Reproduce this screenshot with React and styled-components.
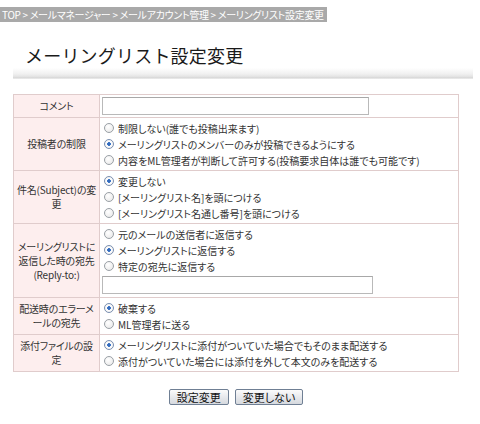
import React, { useState } from 'react'
import styled, { createGlobalStyle } from 'styled-components'

const GlobalStyle = createGlobalStyle`
  body {
    margin: 0;
    background: #fff;
    font-family: "Noto Sans CJK JP", "Noto Sans", sans-serif;
    color: #333;
  }
`

const Page = styled.div`
  width: 480px;
  height: 424px;
  overflow: hidden;
`

const Breadcrumb = styled.div`
  display: inline-block;
  height: 15px;
  line-height: 15px;
  padding: 0 3px 0 2px;
  background: #a9a9a9;
  color: #fff;
  font-size: 10px;
  letter-spacing: -0.3px;
  font-feature-settings: "palt";
  white-space: nowrap;
`

const TitleBlock = styled.div`
  margin: 18px 7px 0 13px;
`

const Title = styled.h1`
  margin: 0;
  padding-left: 12px;
  height: 26px;
  line-height: 26px;
  font-size: 18px;
  font-weight: normal;
  color: #1a1a1a;
  letter-spacing: 0.2px;
`

const TitleBand = styled.div`
  height: 11px;
  background: linear-gradient(#fff 0%, #f0f0f0 55%, #e2e2e2 80%, #d6d6d6 90%, #f4f4f4 100%);
`

const Table = styled.table`
  margin: 15px 0 0 13px;
  width: 446px;
  border-collapse: collapse;
  border: 1px solid #e0cccc;
  font-size: 10px;
  font-feature-settings: "palt";
`

const Label = styled.th`
  box-sizing: border-box;
  width: 86px;
  padding: 2px 0;
  background: #fdeeee;
  border: 1px solid #e0cccc;
  font-weight: normal;
  text-align: center;
  line-height: 14px;
  letter-spacing: -0.2px;
  white-space: nowrap;
  color: #333;
`

const Cell = styled.td`
  padding: 2px 2px;
  border: 1px solid #e0cccc;
  vertical-align: middle;
`

const Option = styled.label`
  display: flex;
  align-items: center;
  height: 16px;
  white-space: nowrap;
  color: #333;
`

const Radio = styled.input.attrs({ type: 'radio' })`
  appearance: none;
  flex: none;
  margin: 0 4px 0 2px;
  width: 10px;
  height: 10px;
  border-radius: 50%;
  border: 1px solid #9aa0a6;
  background: radial-gradient(circle at 40% 35%, #fff 0%, #e6e6e6 100%);
  &:checked {
    background: radial-gradient(circle, #2a5db0 0%, #3f78c8 28%, #fff 38%, #e8e8e8 100%);
    border-color: #7a8fb0;
  }
`

const TextInput = styled.input.attrs({ type: 'text' })`
  box-sizing: border-box;
  display: block;
  width: ${(props) => (props.$wide ? '271px' : '267px')};
  height: 18px;
  margin: ${(props) => (props.$wide ? '2px 0 1px' : '0')};
  border: 1px solid #b9b9b9;
  border-top-color: #a8a8a8;
  background: #fff;
`

const ButtonRow = styled.div`
  width: 446px;
  margin: 17px 0 0 13px;
  display: flex;
  justify-content: center;
  gap: 6px;
`

const Button = styled.button`
  height: 16px;
  padding: 0 7px;
  border: 1px solid #6f7f94;
  border-radius: 2px;
  background: linear-gradient(#fbfbfb, #e4e6ea 60%, #d6d9de);
  font-family: "Noto Sans CJK JP", sans-serif;
  font-size: 11px;
  font-feature-settings: "palt";
  line-height: 14px;
  color: #111;
`

const rows = [
  {
    label: ['投稿者の制限'],
    name: 'post',
    options: [
      '制限しない(誰でも投稿出来ます)',
      'メーリングリストのメンバーのみが投稿できるようにする',
      '内容をML管理者が判断して許可する(投稿要求自体は誰でも可能です)',
    ],
    checked: 1,
  },
  {
    label: ['件名(Subject)の変', '更'],
    name: 'subject',
    options: ['変更しない', '[メーリングリスト名]を頭につける', '[メーリングリスト名通し番号]を頭につける'],
    checked: 0,
  },
  {
    label: ['メーリングリストに', '返信した時の宛先', '(Reply-to:)'],
    name: 'reply',
    options: ['元のメールの送信者に返信する', 'メーリングリストに返信する', '特定の宛先に返信する'],
    checked: 1,
    input: true,
  },
  {
    label: ['配送時のエラーメ', 'ールの宛先'],
    name: 'error',
    options: ['破棄する', 'ML管理者に送る'],
    checked: 0,
  },
  {
    label: ['添付ファイルの設', '定'],
    name: 'attach',
    options: ['メーリングリストに添付がついていた場合でもそのまま配送する', '添付がついていた場合には添付を外して本文のみを配送する'],
    checked: 0,
  },
]

const App = () => {
  const [values, setValues] = useState(() =>
    Object.fromEntries(rows.map((r) => [r.name, r.checked]))
  )

  return (
    <Page>
      <GlobalStyle />
      <Breadcrumb>TOP &gt; メールマネージャー &gt; メールアカウント管理 &gt; メーリングリスト設定変更</Breadcrumb>
      <TitleBlock>
        <Title>メーリングリスト設定変更</Title>
        <TitleBand />
      </TitleBlock>
      <Table>
        <tbody>
          <tr>
            <Label>コメント</Label>
            <Cell>
              <TextInput />
            </Cell>
          </tr>
          {rows.map((row) => (
            <tr key={row.name}>
              <Label>
                {row.label.map((line, i) => (
                  <React.Fragment key={i}>
                    {i > 0 && <br />}
                    {line}
                  </React.Fragment>
                ))}
              </Label>
              <Cell>
                {row.options.map((opt, i) => (
                  <Option key={i}>
                    <Radio
                      name={row.name}
                      checked={values[row.name] === i}
                      onChange={() => setValues({ ...values, [row.name]: i })}
                    />
                    {opt}
                  </Option>
                ))}
                {row.input && <TextInput $wide />}
              </Cell>
            </tr>
          ))}
        </tbody>
      </Table>
      <ButtonRow>
        <Button>設定変更</Button>
        <Button>変更しない</Button>
      </ButtonRow>
    </Page>
  )
}

export default App
